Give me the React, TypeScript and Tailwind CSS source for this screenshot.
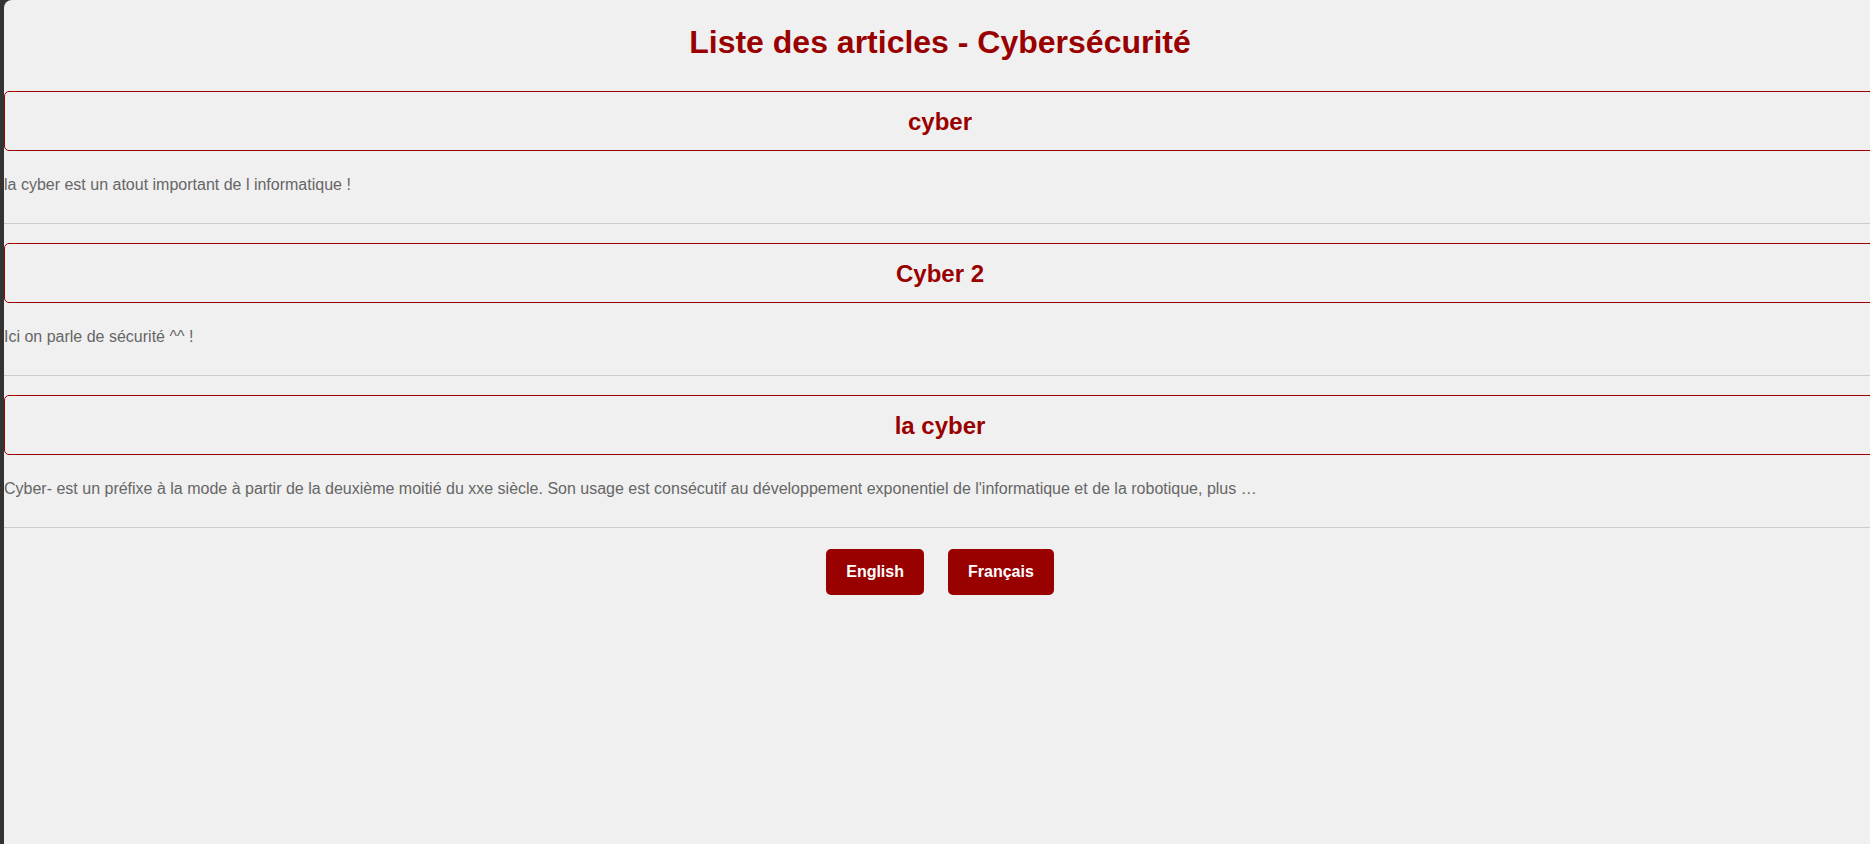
const articles = [
  { title: "cyber", body: "la cyber est un atout important de l informatique !" },
  { title: "Cyber 2", body: "Ici on parle de sécurité ^^ !" },
  {
    title: "la cyber",
    body: "Cyber- est un préfixe à la mode à partir de la deuxième moitié du xxe siècle. Son usage est consécutif au développement exponentiel de l'informatique et de la robotique, plus …",
  },
];

export default function App() {
  return (
    <div className="h-screen w-full overflow-hidden bg-[#333333] pl-[4px] font-['Liberation_Sans',Arial,sans-serif]">
      <div className="w-[1872px] h-full bg-[#f0f0f0] rounded-tl-lg pt-[24px]">
        <h1 className="text-center text-[32px] leading-[37px] font-bold text-[#990000]">
          Liste des articles - Cybersécurité
        </h1>

        <div className="mt-[30px]">
          {articles.map((a) => (
            <div key={a.title} className="border-b border-[#cccccc] mb-[19px]">
              <div className="h-[60px] border border-[#990000] rounded-[5px] flex items-center justify-center pt-[1px]">
                <h2 className="text-[24px] leading-[28px] font-bold text-[#990000]">{a.title}</h2>
              </div>
              <p className="mt-[25px] mb-[29px] text-[16px] leading-[18px] text-[#666666]">{a.body}</p>
            </div>
          ))}
        </div>

        <div className="flex justify-center gap-[24px] pt-[2px]">
          <button className="h-[46px] px-[20px] rounded-[5px] bg-[#990000] text-white text-[16px] font-bold">
            English
          </button>
          <button className="h-[46px] px-[20px] rounded-[5px] bg-[#990000] text-white text-[16px] font-bold">
            Français
          </button>
        </div>
      </div>
    </div>
  );
}
